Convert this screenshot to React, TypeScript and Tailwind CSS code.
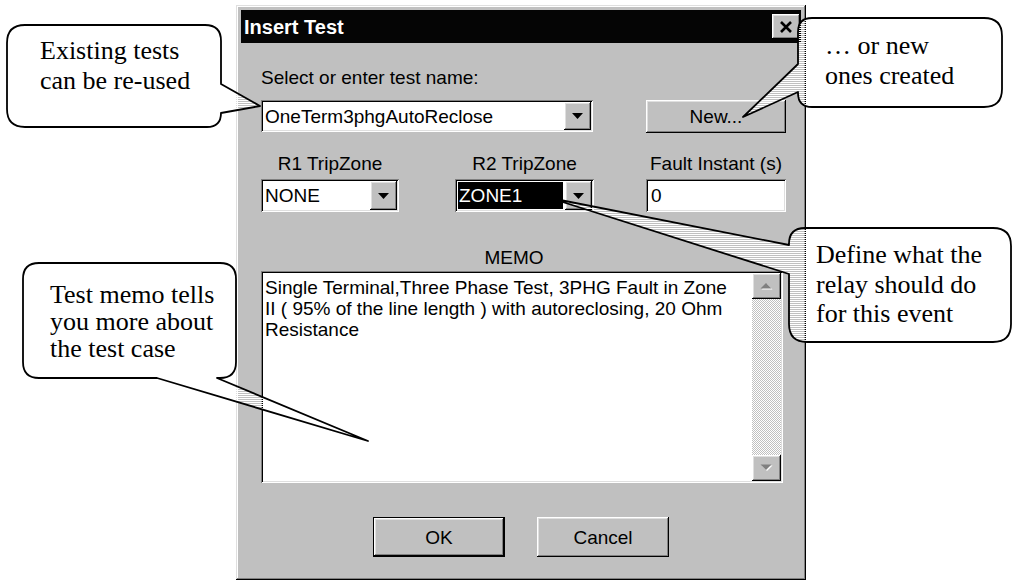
import React from "react";

// Win95-style bevels built from inset shadows
const RAISED =
  "shadow-[inset_-1px_-1px_#000000,inset_1px_1px_#ffffff,inset_-2px_-2px_#808080,inset_2px_2px_#dfdfdf]";
const SUNKEN =
  "shadow-[inset_1px_1px_#808080,inset_-1px_-1px_#ffffff,inset_2px_2px_#000000,inset_-2px_-2px_#dfdfdf]";
const WINDOW =
  "shadow-[inset_-1px_-1px_#000000,inset_1px_1px_#dfdfdf,inset_-2px_-2px_#808080,inset_2px_2px_#ffffff]";

function DownArrow() {
  return (
    <svg width="11" height="6" viewBox="0 0 11 6">
      <polygon points="0,0 11,0 5.5,6" fill="#000" />
    </svg>
  );
}

function DropButton() {
  return (
    <div
      className={`flex h-full w-[27px] shrink-0 items-center justify-center bg-[#c0c0c0] ${RAISED}`}
    >
      <DownArrow />
    </div>
  );
}

function Combo({
  className,
  value,
  selected = false,
}: {
  className: string;
  value: string;
  selected?: boolean;
}) {
  return (
    <div className={`flex bg-white p-[2px] ${SUNKEN} ${className}`}>
      {selected ? (
        <div className="m-[1px] mr-[2px] flex flex-1 items-center bg-black pl-[1px] leading-none text-white">
          {value}
        </div>
      ) : (
        <div className="flex flex-1 items-center pl-[2px] leading-none">{value}</div>
      )}
      <DropButton />
    </div>
  );
}

function PushButton({
  children,
  className = "",
  isDefault = false,
}: {
  children: React.ReactNode;
  className?: string;
  isDefault?: boolean;
}) {
  if (isDefault) {
    return (
      <div className={`border border-black ${className}`}>
        <div
          className={`flex h-full w-full items-center justify-center bg-[#c0c0c0] leading-none ${RAISED}`}
        >
          {children}
        </div>
      </div>
    );
  }
  return (
    <div
      className={`flex items-center justify-center bg-[#c0c0c0] leading-none ${RAISED} ${className}`}
    >
      {children}
    </div>
  );
}

function ScrollButton({ up = false }: { up?: boolean }) {
  return (
    <div
      className={`flex h-[26px] w-full shrink-0 items-center justify-center bg-[#c0c0c0] ${RAISED}`}
    >
      <svg width="13" height="8" viewBox="0 0 13 8">
        {up ? (
          <>
            <polygon points="1.5,7.5 12.5,7.5 7,2" fill="#ffffff" />
            <polygon points="0.5,6.5 11.5,6.5 6,1" fill="#808080" />
          </>
        ) : (
          <>
            <polygon points="1.5,1.5 12.5,1.5 7,7" fill="#ffffff" />
            <polygon points="0.5,0.5 11.5,0.5 6,6" fill="#808080" />
          </>
        )}
      </svg>
    </div>
  );
}

function Memo() {
  return (
    <div className={`ml-[20px] mt-[2px] flex h-[212px] w-[522px] bg-white p-[2px] ${SUNKEN}`}>
      <div className="flex-1 whitespace-nowrap pl-[2px] pt-[4px] leading-[21px]">
        <div>Single Terminal,Three Phase Test, 3PHG Fault in Zone</div>
        <div>II ( 95% of the line length ) with autoreclosing, 20 Ohm</div>
        <div>Resistance</div>
      </div>
      <div className="flex w-[29px] flex-col">
        <ScrollButton up />
        <div className="flex-1 bg-[image:repeating-conic-gradient(#c0c0c0_0%_25%,#ffffff_0%_50%)] [background-size:2px_2px]" />
        <ScrollButton />
      </div>
    </div>
  );
}

function InsertTestDialog() {
  return (
    <div
      className={`flex h-[575px] w-[570px] flex-col bg-[#c0c0c0] p-[5px] font-['Liberation_Sans',Arial,sans-serif] text-[19px] text-black ${WINDOW}`}
    >
      <div className="flex h-[33px] shrink-0 items-center justify-between bg-[#050505] pl-[3px] pr-[1px]">
        <span className="text-[20px] font-bold leading-none text-white">Insert Test</span>
        <div
          className={`flex h-[25px] w-[28px] items-center justify-center bg-[#c0c0c0] ${RAISED}`}
        >
          <svg width="14" height="12" viewBox="0 0 14 12">
            <path d="M2 1 L12 11 M12 1 L2 11" stroke="#000" strokeWidth="2.6" />
          </svg>
        </div>
      </div>

      <div className="ml-[20px] mt-[24px] leading-[22px]">Select or enter test name:</div>

      <div className="ml-[20px] mt-[11px] flex items-start">
        <Combo className="h-[32px] w-[332px]" value="OneTerm3phgAutoReclose" />
        <PushButton className="ml-[53px] h-[33px] w-[140px]">New...</PushButton>
      </div>

      <div className="ml-[20px] mt-[20px] flex leading-[22px]">
        <div className="w-[138px] text-center">R1 TripZone</div>
        <div className="ml-[56px] w-[139px] text-center">R2 TripZone</div>
        <div className="ml-[52px] w-[140px] text-center">Fault Instant (s)</div>
      </div>

      <div className="ml-[20px] mt-[4px] flex">
        <Combo className="h-[33px] w-[138px]" value="NONE" />
        <Combo className="ml-[56px] h-[33px] w-[139px]" value="ZONE1" selected />
        <div
          className={`ml-[52px] flex h-[33px] w-[140px] items-center bg-white pl-[5px] leading-none ${SUNKEN}`}
        >
          0
        </div>
      </div>

      <div className="ml-[20px] mt-[35px] w-[506px] text-center leading-[22px]">MEMO</div>

      <Memo />

      <div className="mt-[34px] flex justify-center gap-[32px]">
        <PushButton isDefault className="h-[40px] w-[132px]">
          OK
        </PushButton>
        <PushButton className="h-[40px] w-[132px]">Cancel</PushButton>
      </div>
    </div>
  );
}

// Speech-bubble annotations laid over the dialog
function Callouts() {
  const bubbles = [
    // Existing tests can be re-used
    "M25,25 H205 Q221,25 221,41 V84 L260,106 L221,113 V113 Q221,127 207,127 H25 Q7,127 7,109 V43 Q7,25 25,25 Z",
    // ... or new ones created
    "M812,18 H984 Q1002,18 1002,36 V89 Q1002,107 984,107 H812 Q798,107 798,93 V92 L743,117 L798,64 V32 Q798,18 812,18 Z",
    // Test memo tells you more about the test case
    "M39,263 H220 Q236,263 236,279 V362 Q236,378 220,378 H217 L368,441 L157,378 H39 Q23,378 23,362 V279 Q23,263 39,263 Z",
    // Define what the relay should do for this event
    "M805,228 H993 Q1011,228 1011,246 V324 Q1011,342 993,342 H807 Q789,342 789,324 V274 L550,198 L789,245 V244 Q789,228 805,228 Z",
  ];

  return (
    <>
      <svg
        className="pointer-events-none absolute left-0 top-0"
        width="1013"
        height="580"
        viewBox="0 0 1013 580"
      >
        <defs>
          <pattern id="hatch" width="4" height="2" patternUnits="userSpaceOnUse">
            <rect width="4" height="1" fill="#ffffff" />
          </pattern>
        </defs>
        {bubbles.map((d, i) => (
          <path
            key={i}
            d={d}
            fill="url(#hatch)"
            stroke="#000"
            strokeWidth="1.8"
            strokeLinejoin="round"
          />
        ))}
      </svg>

      <div className="pointer-events-none absolute left-[40px] top-[36px] whitespace-nowrap font-['Liberation_Serif','Times_New_Roman',serif] text-[26px] leading-[30px] text-black">
        <div>Existing tests</div>
        <div>can be re-used</div>
      </div>
      <div className="pointer-events-none absolute left-[825px] top-[31px] whitespace-nowrap font-['Liberation_Serif','Times_New_Roman',serif] text-[26px] leading-[30px] text-black">
        <div>… or new</div>
        <div>ones created</div>
      </div>
      <div className="pointer-events-none absolute left-[50px] top-[281px] whitespace-nowrap font-['Liberation_Serif','Times_New_Roman',serif] text-[26px] leading-[27px] text-black">
        <div>Test memo tells</div>
        <div>you more about</div>
        <div>the test case</div>
      </div>
      <div className="pointer-events-none absolute left-[816px] top-[240px] whitespace-nowrap font-['Liberation_Serif','Times_New_Roman',serif] text-[26px] leading-[29.5px] text-black">
        <div>Define what the</div>
        <div>relay should do</div>
        <div>for this event</div>
      </div>
    </>
  );
}

export default function App() {
  return (
    <div className="relative h-[580px] w-[1013px] overflow-hidden bg-white">
      <div className="pl-[236px] pt-[5px]">
        <InsertTestDialog />
      </div>
      <Callouts />
    </div>
  );
}
